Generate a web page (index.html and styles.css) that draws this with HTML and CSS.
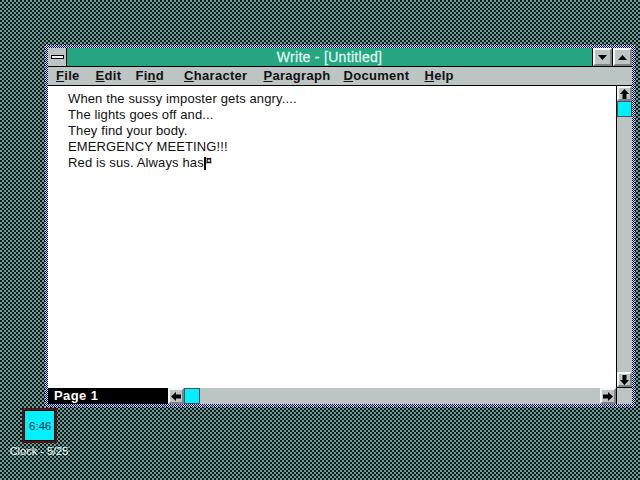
FILE: index.html
```html
<!DOCTYPE html>
<html lang="en">
<head>
<meta charset="utf-8">
<title>Write - [Untitled]</title>
<link rel="stylesheet" href="styles.css">
</head>
<body>
<div class="desktop">
  <section class="window">
    <div class="titlebar">
      <div class="sysbtn"><span class="sysbar"></span></div>
      <div class="title">Write - [Untitled]</div>
      <div class="capbtn"><svg width="9" height="5" viewBox="0 0 9 5"><path d="M0 0h9L4.5 5z"/></svg></div>
      <div class="capbtn"><svg width="9" height="5" viewBox="0 0 9 5"><path d="M0 5h9L4.5 0z"/></svg></div>
    </div>
    <nav class="menubar">
      <span class="mi m1"><u>F</u>ile</span>
      <span class="mi m2"><u>E</u>dit</span>
      <span class="mi m3">Fi<u>n</u>d</span>
      <span class="mi m4"><u>C</u>haracter</span>
      <span class="mi m5"><u>P</u>aragraph</span>
      <span class="mi m6"><u>D</u>ocument</span>
      <span class="mi m7"><u>H</u>elp</span>
    </nav>
    <div class="body">
      <div class="doc">
        <p>When the sussy imposter gets angry....</p>
        <p>The lights goes off and...</p>
        <p>They find your body.</p>
        <p>EMERGENCY MEETING!!!</p>
        <p>Red is sus. Always has<span class="caret"></span><span class="mark">¤</span></p>
      </div>
      <div class="vscroll">
        <div class="arrow"><svg width="9" height="10" viewBox="0 0 9 10"><path d="M4.5 0L9 5H6.5v5h-4V5H0z"/></svg></div>
        <div class="thumb vthumb"></div>
        <div class="track"></div>
        <div class="arrow"><svg width="9" height="10" viewBox="0 0 9 10"><path d="M4.5 10L9 5H6.5V0h-4v5H0z"/></svg></div>
      </div>
    </div>
    <div class="statusrow">
      <div class="page">Page 1</div>
      <div class="hscroll">
        <div class="arrow harrow"><svg width="10" height="9" viewBox="0 0 10 9"><path d="M0 4.5L5 0v2.5h5v4H5V9z"/></svg></div>
        <div class="thumb hthumb"></div>
        <div class="track"></div>
        <div class="arrow harrow"><svg width="10" height="9" viewBox="0 0 10 9"><path d="M10 4.5L5 0v2.5H0v4h5V9z"/></svg></div>
      </div>
      <div class="corner"></div>
    </div>
  </section>
  <div class="icon">
    <div class="clock">6:46</div>
    <div class="iconlabel">Clock - 5/25</div>
  </div>
</div>
</body>
</html>
```
FILE: styles.css
```css
* { box-sizing: border-box; }
html, body { margin: 0; padding: 0; }
.desktop {
  position: relative;
  width: 640px;
  height: 480px;
  overflow: hidden;
  background-color: #0c1c1c;
  background-image: conic-gradient(#6f9a94 25%, #0c1c1c 0 50%, #6f9a94 0 75%, #0c1c1c 0);
  background-size: 4px 4px;
  font-family: "Liberation Sans", Arial, sans-serif;
}
.window {
  position: absolute;
  left: 45px;
  top: 45px;
  width: 590px;
  height: 362px;
  display: flex;
  flex-direction: column;
  padding: 3px;
  background-color: #000080;
  background-image: conic-gradient(#d8deee 25%, #000060 0 50%, #d8deee 0 75%, #000060 0);
  background-size: 2px 2px;
}
.titlebar {
  display: flex;
  height: 19px;
  flex: none;
  background: #26a583;
  border-bottom: 1px solid #000;
}
.sysbtn {
  width: 19px;
  background: #bcc4c4;
  border-right: 1px solid #000;
  display: flex;
  align-items: center;
  justify-content: center;
}
.sysbar {
  width: 13px;
  height: 4px;
  background: #fff;
  border: 1px solid #000;
}
.title {
  flex: 1;
  text-align: center;
  color: #dff5ee;
  font-size: 14px;
  letter-spacing: 0.3px;
  line-height: 18px;
  -webkit-text-stroke: 0.3px #dff5ee;
}
.capbtn {
  width: 19px;
  margin-left: 1px;
  background: #bcc4c4;
  border: 2px solid;
  border-color: #f4f6f6 #7e8484 #7e8484 #f4f6f6;
  box-shadow: -1px 0 0 #000;
  display: flex;
  align-items: center;
  justify-content: center;
}
.menubar {
  height: 19px;
  flex: none;
  background: #bcc4c4;
  border-bottom: 1px solid #000;
  display: flex;
  align-items: center;
  font-size: 13px;
  letter-spacing: 0.3px;
  font-weight: 700;
  color: #111;
  padding: 0 0 1px 8px;
}
.mi { white-space: nowrap; }
.m1 { margin-right: 16px; }
.m2 { margin-right: 14px; }
.m3 { margin-right: 20px; }
.m4 { margin-right: 16px; }
.m5 { margin-right: 13px; }
.m6 { margin-right: 15px; }
.body {
  flex: 1;
  display: flex;
  min-height: 0;
}
.doc {
  flex: 1;
  background: #fff;
  padding: 5px 0 0 20px;
  font-size: 13px;
  letter-spacing: 0.13px;
  color: #111;
}
.doc p {
  margin: 0;
  height: 16px;
  line-height: 16px;
  white-space: nowrap;
}
.caret {
  display: inline-block;
  width: 2px;
  height: 13px;
  background: #000;
  vertical-align: -3px;
}
.mark {
  font-size: 11px;
  line-height: 10px;
  vertical-align: 3px;
  font-weight: 700;
}
.vscroll {
  width: 16px;
  flex: none;
  display: flex;
  flex-direction: column;
  background: #bcc4c4;
  border-left: 1px solid #000;
  border-bottom: 1px solid #000;
}
.arrow {
  flex: none;
  height: 15px;
  background: #bcc4c4;
  border: 2px solid;
  border-color: #f4f6f6 #7e8484 #7e8484 #f4f6f6;
  display: flex;
  align-items: center;
  justify-content: center;
}
.track { flex: 1; }
.thumb { background: #00f0fc; flex: none; border: 1px solid #44556a; }
.vthumb { height: 16px; }
.statusrow {
  display: flex;
  height: 16px;
  flex: none;
  background: #bcc4c4;
}
.page {
  width: 120px;
  background: #000;
  color: #fff;
  font-size: 13px;
  font-weight: 700;
  line-height: 15px;
  padding-left: 6px;
  letter-spacing: 0.4px;
}
.hscroll { flex: 1; display: flex; }
.harrow { width: 16px; height: auto; }
.hthumb { width: 16px; }
.corner { width: 16px; flex: none; border-left: 1px solid #000; }
.icon {
  position: absolute;
  left: 0;
  top: 408px;
  width: 78px;
  display: flex;
  flex-direction: column;
  align-items: center;
}
.clock {
  width: 35px;
  height: 35px;
  background: #00f0fc;
  border: 2px solid #4a1616;
  box-shadow: inset 0 0 0 1px #200808;
  color: #0a3040;
  font-size: 11.5px;
  line-height: 32px;
  text-align: right;
  padding-right: 3px;
}
.iconlabel {
  margin-top: 1px;
  color: #f0f6f4;
  font-size: 11px;
  line-height: 14px;
  white-space: nowrap;
}
```
